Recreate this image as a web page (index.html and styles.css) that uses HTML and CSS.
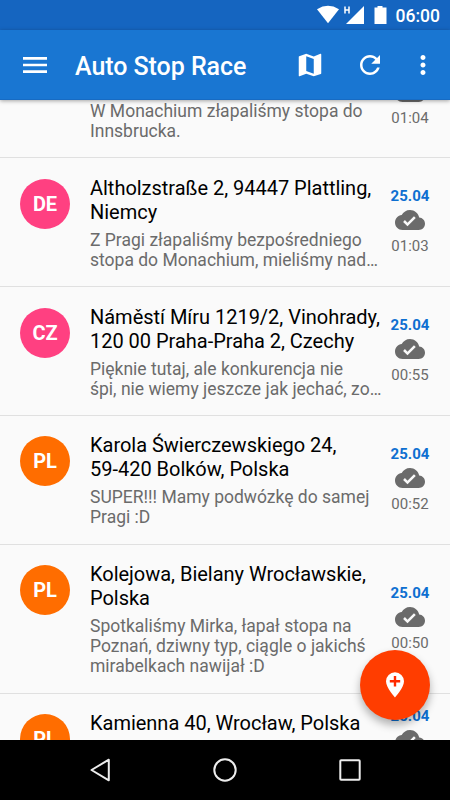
FILE: index.html
```html
<!DOCTYPE html>
<html lang="pl">
<head>
<meta charset="utf-8">
<title>Auto Stop Race</title>
<link rel="stylesheet" href="styles.css">
</head>
<body>
<svg class="defs" width="0" height="0">
  <symbol id="cloud" viewBox="0 0 24 24"><path d="M19.35 10.04C18.67 6.59 15.64 4 12 4 9.11 4 6.6 5.64 5.35 8.04 2.34 8.36 0 10.91 0 14c0 3.31 2.69 6 6 6h13c2.76 0 5-2.24 5-5 0-2.64-2.05-4.78-4.65-4.96zM10 17l-3.5-3.5 1.41-1.41L10 14.17 15.18 9l1.41 1.41L10 17z"/></symbol>
</svg>
<div class="screen">
  <div class="status">
    <svg class="status-icons" viewBox="0 0 90 30">
      <path d="M17 9.2Q28 2.4 39 9.2L28 23.2z"/>
      <path class="letter" d="M45 6.4v7.200M49 6.4v7.200M45 10h4"/>
      <path d="M64 6v18H46z"/>
      <path d="M77.500 6h5v1.500h4V24h-12V7.500h3z"/>
    </svg>
    <span class="clock">06:00</span>
  </div>
  <header class="appbar">
    <svg class="menu" viewBox="0 0 24 24"><path d="M3 18h18v-2H3v2zm0-5h18v-2H3v2zm0-7v2h18V6H3z"/></svg>
    <h1>Auto Stop Race</h1>
    <svg class="action" viewBox="0 0 24 24"><path d="M20.500 3l-.16.03L15 5.100 9 3 3.360 4.900c-.21.07-.36.25-.36.48V20.500c0 .28.22.5.5.5l.16-.03L9 18.900l6 2.100 5.640-1.900c.21-.07.36-.25.36-.48V3.500c0-.28-.22-.5-.5-.5zM15 19l-6-2.110V5l6 2.110V19z"/></svg>
    <svg class="action refresh" viewBox="0 0 24 24"><path d="M17.650 6.350C16.200 4.900 14.210 4 12 4c-4.420 0-7.990 3.580-7.990 8s3.570 8 7.990 8c3.730 0 6.840-2.550 7.730-6h-2.080c-.82 2.330-3.040 4-5.650 4-3.310 0-6-2.690-6-6s2.690-6 6-6c1.660 0 3.140.69 4.220 1.780L13 11h7V4l-2.350 2.350z"/></svg>
    <svg class="action more" viewBox="0 0 24 24"><path d="M12 8c1.100 0 2-.9 2-2s-.9-2-2-2-2 .9-2 2 .9 2 2 2zm0 2c-1.100 0-2 .9-2 2s.9 2 2 2 2-.9 2-2-.9-2-2-2zm0 6c-1.100 0-2 .9-2 2s.9 2 2 2 2-.9 2-2-.9-2-2-2z"/></svg>
  </header>
  <main class="list">
    <article class="row scrolled">
      <div class="text"><p>W Monachium złapaliśmy stopa do<br>Innsbrucka.</p></div>
      <div class="meta"><svg class="cloud"><use href="#cloud"/></svg><time>01:04</time></div>
    </article>
    <article class="row">
      <div class="badge pink">DE</div>
      <div class="text"><h2>Altholzstraße 2, 94447 Plattling,<br>Niemcy</h2><p>Z Pragi złapaliśmy bezpośredniego<br>stopa do Monachium, mieliśmy nad…</p></div>
      <div class="meta"><b>25.04</b><svg class="cloud"><use href="#cloud"/></svg><time>01:03</time></div>
    </article>
    <article class="row">
      <div class="badge pink">CZ</div>
      <div class="text"><h2>Náměstí Míru 1219/2, Vinohrady,<br>120 00 Praha-Praha 2, Czechy</h2><p>Pięknie tutaj, ale konkurencja nie<br>śpi, nie wiemy jeszcze jak jechać, zo…</p></div>
      <div class="meta"><b>25.04</b><svg class="cloud"><use href="#cloud"/></svg><time>00:55</time></div>
    </article>
    <article class="row snug">
      <div class="badge">PL</div>
      <div class="text"><h2>Karola Świerczewskiego 24,<br>59-420 Bolków, Polska</h2><p>SUPER!!! Mamy podwózkę do samej<br>Pragi :D</p></div>
      <div class="meta"><b>25.04</b><svg class="cloud"><use href="#cloud"/></svg><time>00:52</time></div>
    </article>
    <article class="row snug tall">
      <div class="badge">PL</div>
      <div class="text"><h2>Kolejowa, Bielany Wrocławskie,<br>Polska</h2><p>Spotkaliśmy Mirka, łapał stopa na<br>Poznań, dziwny typ, ciągle o jakichś<br>mirabelkach nawijał :D</p></div>
      <div class="meta"><b>25.04</b><svg class="cloud"><use href="#cloud"/></svg><time>00:50</time></div>
    </article>
    <article class="row snug last">
      <div class="badge">PL</div>
      <div class="text"><h2>Kamienna 40, Wrocław, Polska</h2></div>
      <div class="meta"><b>25.04</b><svg class="cloud"><use href="#cloud"/></svg></div>
    </article>
  </main>
  <nav class="navbar">
    <svg viewBox="0 0 30 30"><path d="M23.800 4.700v20.600L6.500 15z"/></svg>
    <svg viewBox="0 0 30 30"><circle cx="15" cy="15" r="10.700"/></svg>
    <svg viewBox="0 0 30 30"><rect x="5.300" y="5.300" width="19.400" height="19.400" rx=".8"/></svg>
  </nav>
  <button class="fab" aria-label="Dodaj">
    <svg viewBox="0 0 20 28"><path class="pin" d="M10 1.300a9 9 0 0 0-9 9C1 17 10 26.500 10 26.500S19 17 19 10.300a9 9 0 0 0-9-9z"/><path class="plus" d="M10 5v10.500M4.800 10.200h10.400"/></svg>
  </button>
</div>
</body>
</html>
```
FILE: styles.css
```css
* { box-sizing: border-box; margin: 0; padding: 0; }

body {
  font-family: Roboto, sans-serif;
  background: #fafafa;
}

.defs { display: none; }

.screen {
  position: relative;
  display: flex;
  flex-direction: column;
  width: 450px;
  height: 800px;
  overflow: hidden;
}

.status {
  display: flex;
  justify-content: flex-end;
  align-items: center;
  height: 30px;
  padding-right: 10px;
  background: #1565c0;
  color: #fff;
}

.status-icons { width: 90px; height: 30px; margin-right: 5.5px; fill: #fff; }
.letter { fill: none; stroke: #fff; stroke-width: 1.5; }
.clock { font-size: 17.5px; font-weight: 500; line-height: 30px; padding-top: 1px; }

.appbar {
  position: relative;
  z-index: 1;
  display: flex;
  align-items: center;
  height: 70px;
  flex: none;
  padding: 0 12.5px 0 19px;
  background: #1976d2;
  border-bottom: 1px solid #176bc3;
  box-shadow: 0 1px 4px rgba(0, 0, 0, .35);
  color: #fff;
}

.appbar svg { fill: #fff; flex: none; }
.menu { width: 32px; height: 32px; }
.appbar h1 { flex: 1; margin-left: 24px; font-size: 25px; font-weight: 500; line-height: 30px; padding-top: 4px; letter-spacing: -.05px; }
.action { width: 30px; height: 30px; }
.refresh { margin-left: 30px; }
.more { margin-left: 22.5px; }

.list { flex: 1; min-height: 0; overflow: hidden; }

.row {
  display: flex;
  height: 129px;
  padding: 0 20px;
  border-bottom: 1px solid #e0e0e0;
}

.badge {
  flex: none;
  width: 50px;
  height: 50px;
  margin: 20.500px 20px 0 0;
  border-radius: 50%;
  background: #ff6d00;
  color: #fff;
  font-size: 20px;
  font-weight: 700;
  line-height: 50px;
  text-align: center;
}

.badge.pink { background: #ff4081; }

.text { flex: 1; padding-top: 18px; white-space: nowrap; }
.text h2 { font-size: 20px; font-weight: 400; line-height: 24px; color: #000; letter-spacing: -.02px; }
.text p { margin-top: 6px; font-size: 17.5px; line-height: 20px; color: #6b6b6b; }

.meta {
  flex: none;
  width: 40px;
  display: flex;
  flex-direction: column;
  align-items: center;
  justify-content: center;
  padding-bottom: 2px;
  font-size: 15px;
  line-height: 18px;
}

.meta b { color: #0d6fd1; }
.meta time { color: #6b6b6b; }
.cloud { flex: none; width: 30px; height: 30px; margin-bottom: 2px; fill: #6b6b6b; }

.scrolled { height: 58px; padding-left: 90px; overflow: hidden; }
.scrolled .text { padding-top: 0; }
.scrolled .text p { margin-top: 1px; }
.scrolled .meta { justify-content: flex-end; padding-bottom: 30px; }
.snug .badge { margin-top: 20px; }
.snug .text { padding-top: 17px; }
.snug .meta { padding-bottom: 3px; }
.tall { height: 149px; }
.last { height: 96px; border: 0; }
.last .meta { justify-content: flex-start; padding-top: 13px; }

.navbar {
  flex: none;
  height: 60px;
  display: flex;
  justify-content: center;
  align-items: center;
  gap: 95px;
  background: #000;
}

.navbar svg { width: 30px; height: 30px; fill: none; stroke: #ededed; stroke-width: 2; stroke-linejoin: round; }

.fab {
  position: absolute;
  right: 20px;
  bottom: 80px;
  display: flex;
  align-items: center;
  justify-content: center;
  width: 70px;
  height: 70px;
  border: 0;
  border-radius: 50%;
  background: #ff3d00;
  box-shadow: 0 5px 9px rgba(0, 0, 0, .3);
}

.fab svg { width: 20px; height: 28px; }
.pin { fill: #fff; }
.plus { stroke: #ff2a00; stroke-width: 2.4; fill: none; }
```
